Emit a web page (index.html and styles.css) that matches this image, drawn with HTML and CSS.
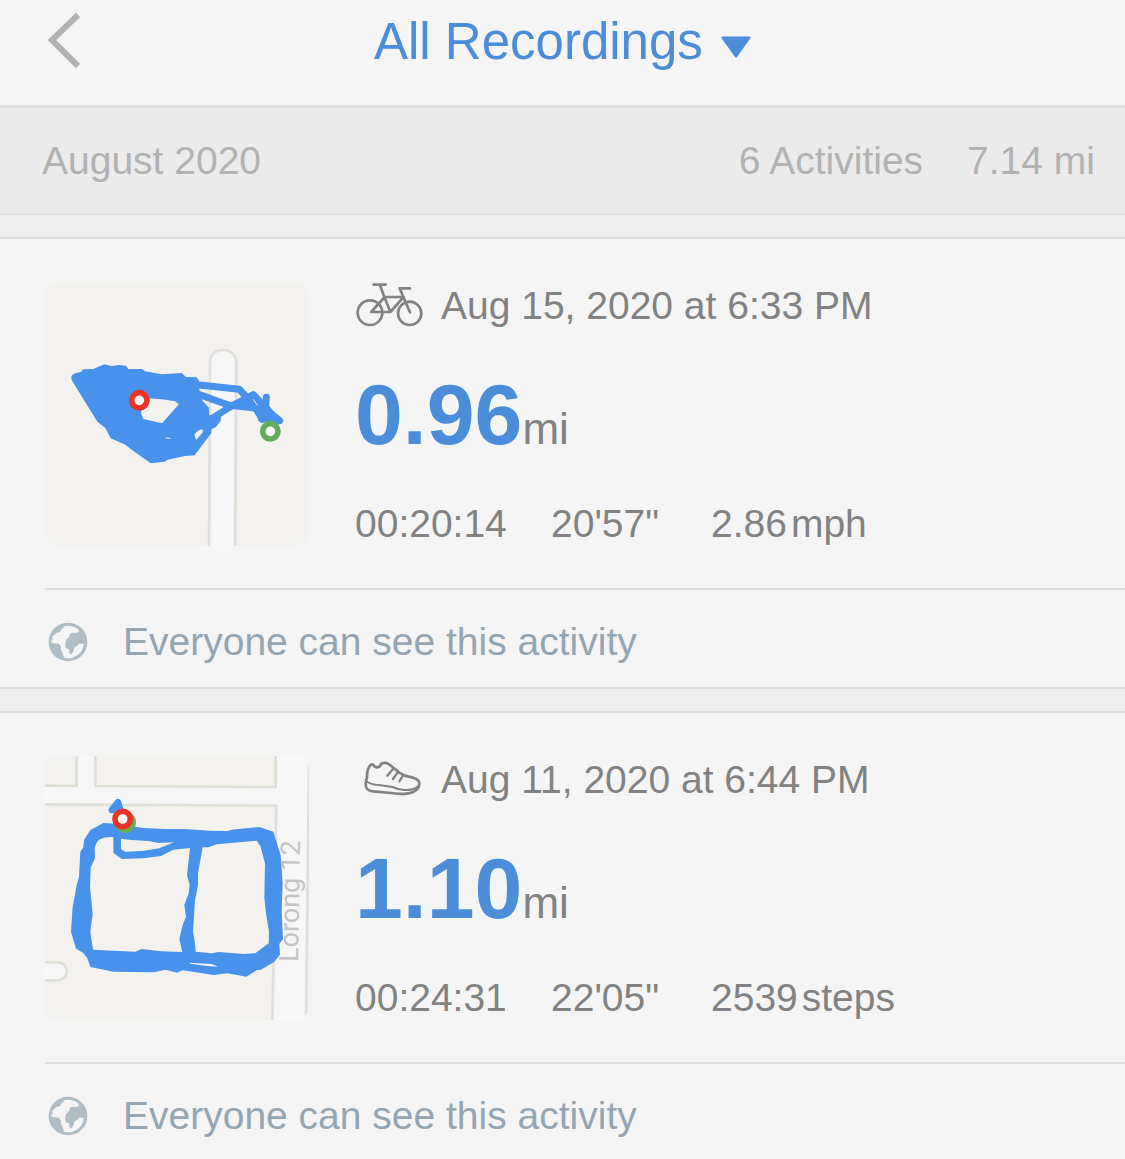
FILE: index.html
```html
<!DOCTYPE html>
<html lang="en">
  <head>
    <meta charset="UTF-8" />
    <meta name="viewport" content="width=device-width, initial-scale=1.0" />
    <title>All Recordings</title>
    <link rel="stylesheet" href="styles.css">
  </head>
  <body>
    <header class="topbar">
      <button class="back-btn" aria-label="Back">
        <svg viewBox="0 0 32 56" width="32" height="56">
          <path d="M30 3 L4 28 L30 54" fill="none" stroke="#b2b2b2" stroke-width="6" />
        </svg>
      </button>
      <div class="filter">
        <select class="filter-select" aria-label="Recordings filter">
          <option>All Recordings</option>
        </select>
        <svg class="filter-arrow" viewBox="0 0 30 22" width="30" height="22">
          <path d="M1 0.5 H29 Q30 1 29.5 2 L16 21 Q15 22 14 21 L0.5 2 Q0 1 1 0.5 Z" fill="#4c8dd9" />
        </svg>
      </div>
    </header>

    <main>
      <section class="month">
        <h2>August 2020</h2>
        <div class="month-totals">
          <span>6 Activities</span>
          <span>7.14 mi</span>
        </div>
      </section>

      <article class="card">
        <div class="card-body">
          <svg class="map" viewBox="15 18 792 792" role="img" aria-label="Ride route">
            <rect x="15" y="18" width="792" height="792" fill="#f3f2ee" />
            <path d="M507 815 L510 260 Q512 223 550 222 Q588 224 589 262 L585 815" fill="#f7f7f7" stroke="#e1dfda" stroke-width="8" />
            <g fill="none" stroke="#4892ec" stroke-width="21" stroke-linejoin="round" stroke-linecap="round">
              <path d="M470 326 L598 340 L640 385 L668 430" />
              <path d="M470 353 L565 387 L645 396" />
              <path d="M515 428 L568 394 L640 356 L690 410 L719 434 L690 442" />
              <path d="M679 364 L676 400 L664 428" />
            </g>
            <path fill="#4892ec" d="M600 372 L640 352 L665 372 L688 390 L702 408 L704 424 L722 432 L720 444 L684 440 L660 437 L650 420 L636 400 L595 398 Z" />
            <path fill="#4892ec" fill-rule="evenodd" d="M94 300 Q100 292 110 290 L123 288 L130 280 L160 279 L193 265 L215 270 L236 267 L258 269 L265 279 L306 279 L315 286 L365 295 L425 291 L438 303 L470 304 L478 316 L478 342 L488 375 L506 394 L508 418 L528 413 L543 423 L542 434 L528 453 L515 460 L514 471 L464 538 L435 540 L380 552 L374 557 L332 562 L276 522 L256 506 L212 487 L196 456 L172 437 L112 340 L94 309 Z M316 368 Q360 366 405 376 L417 385 L366 442 L310 429 L304 414 L304 390 Z M463 477 Q472 462 487 460 L489 467 L469 492 Z" />
            <path d="M376 486 L392 487 M640 370 L652 388" stroke="#f3f2ee" stroke-width="3" />
            <circle cx="298" cy="373" r="23" fill="#fff" stroke="#e93425" stroke-width="17" />
            <circle cx="691" cy="466" r="23" fill="#fff" stroke="#62ad58" stroke-width="17" />
          </svg>
          <div class="details">
            <div class="when">
              <svg class="sport" viewBox="15 18 210 144" role="img" aria-label="Cycling">
                <g fill="none" stroke="#828282" stroke-width="8" stroke-linecap="round" stroke-linejoin="round">
                  <circle cx="60" cy="110" r="37" />
                  <circle cx="179" cy="112" r="35" />
                  <path d="M71 26 H107 M90 28 L104 65 L121 107 M161 63 H104 L64 108 H121 L161 63" />
                  <path d="M180 37 H149 L161 65 L180 109" />
                </g>
              </svg>
              <time datetime="2020-08-15T18:33">Aug 15, 2020 at 6:33 PM</time>
            </div>
            <div class="distance">
              <strong>0.96</strong>
              <span>mi</span>
            </div>
            <div class="stats">
              <span>00:20:14</span>
              <span>20'57"</span>
              <span class="stat-unit">2.86<span>mph</span></span>
            </div>
          </div>
        </div>
        <div class="privacy">
          <svg class="globe" viewBox="55 125 120 120" aria-hidden="true">
            <circle cx="115" cy="185" r="58" fill="#b1bdc5" />
            <path fill="#f5f5f5" d="M102 138 L118 136 L137 141 L147 149 L147 156 L138 159 L134 157 L122 159 L118 171 L109 179 L106 195 L109 204 L118 207 L120 220 L125 222 L132 212 L134 202 L143 196 L147 190 L163 190 Q160 213 143 225 Q126 237 106 233 L101 227 L98 216 L93 209 L94 200 L88 190 L66 188 L65 182 L69 177 L68 168 L74 165 L79 158 L91 155 L96 145 L101 144 Z" />
          </svg>
          <span>Everyone can see this activity</span>
        </div>
      </article>

      <article class="card">
        <div class="card-body">
          <svg class="map" viewBox="15 18 792 792" role="img" aria-label="Walk route">
            <rect x="15" y="18" width="792" height="792" fill="#f7f7f7" />
            <g fill="#f3f2ee" stroke="#e1dfda" stroke-width="8">
              <path d="M5 5 H110 V108 L5 107 Z" />
              <path d="M166 5 H707 V111 L166 108 Z" />
              <path d="M5 163 L709 167 L697 820 H5 Z" />
              <path d="M807 45 L798 820 H830 V45 Z" />
            </g>
            <path d="M5 637 H56 Q80 640 80 664 Q80 689 54 691 H5" fill="#f7f7f7" stroke="#e1dfda" stroke-width="8" />
            <path fill="#4892ec" fill-rule="evenodd" d="M151 240 L190 219 L230 221 L310 234 L375 237 L430 237 L510 242 L562 243 L574 239 L658 231 L700 245 L722 315 L728 400 L725 482 L729 568 L718 582 L720 614 L702 636 L661 660 L651 660 L619 680 L562 670 L521 675 L428 661 L411 668 L377 659 L342 667 L220 665 L151 651 L142 625 L129 608 L108 596 L93 545 L98 470 L110 406 L117 380 L121 305 L130 292 L132 270 Z M180 268 Q195 260 220 261 L220 308 L245 327 L311 325 L363 318 L400 299 L450 294 L441 375 L449 405 L446 430 L433 465 L438 500 L427 528 L418 568 L427 606 L365 604 L305 597 L285 605 L159 599 L151 545 L158 492 L150 410 L152 353 L165 325 L164 295 Q170 272 180 268 Z M243 266 L275 270 L325 273 L357 279 L402 277 L357 295 L308 303 L255 305 L243 297 Z M488 292 L506 292 L530 283 L650 272 L661 288 L675 340 L673 443 L678 490 L687 545 L686 580 L646 610 L610 612 L536 606 L515 610 L467 605 L465 580 L459 545 L465 450 L474 406 L474 370 Z M449 638 L515 642 L534 650 L510 649 L449 641 Z" />
            <text class="street" transform="translate(774 636) rotate(-89)">Lorong 12</text>
            <path d="M234 156 L240 176 L215 180 Z" fill="#4892ec" stroke="#4892ec" stroke-width="19" stroke-linejoin="round" />
            <circle cx="256" cy="217" r="32" fill="#62ad58" />
            <circle cx="248" cy="207" r="23" fill="#fff" stroke="#e93425" stroke-width="17" />
          </svg>
          <div class="details">
            <div class="when">
              <svg class="sport" viewBox="15 18 210 144" role="img" aria-label="Walking">
                <g fill="none" stroke="#828282" stroke-width="8" stroke-linecap="round" stroke-linejoin="round">
                  <path d="M61 45 L68 43 Q74 51 80 52 Q90 53 93 42 Q105 35 116 42 L147 67 Q162 78 176 80 Q198 84 206 93 Q210 101 205 113 Q194 128 174 130 Q155 134 125 129 L68 124 Q48 122 47 105 Q46 94 51 83 Q50 60 61 45 Z" />
                  <path d="M49 93 Q57 103 90 106 L128 111 Q143 119 163 120 Q187 122 205 109" stroke-width="6" />
                  <path d="M129 57 L112 77 M143 67 L129 87 M158 78 L148 94" stroke-width="7" />
                </g>
              </svg>
              <time datetime="2020-08-11T18:44">Aug 11, 2020 at 6:44 PM</time>
            </div>
            <div class="distance">
              <strong>1.10</strong>
              <span>mi</span>
            </div>
            <div class="stats">
              <span>00:24:31</span>
              <span>22'05"</span>
              <span class="stat-unit">2539<span>steps</span></span>
            </div>
          </div>
        </div>
        <div class="privacy">
          <svg class="globe" viewBox="55 125 120 120" aria-hidden="true">
            <circle cx="115" cy="185" r="58" fill="#b1bdc5" />
            <path fill="#f5f5f5" d="M102 138 L118 136 L137 141 L147 149 L147 156 L138 159 L134 157 L122 159 L118 171 L109 179 L106 195 L109 204 L118 207 L120 220 L125 222 L132 212 L134 202 L143 196 L147 190 L163 190 Q160 213 143 225 Q126 237 106 233 L101 227 L98 216 L93 209 L94 200 L88 190 L66 188 L65 182 L69 177 L68 168 L74 165 L79 158 L91 155 L96 145 L101 144 Z" />
          </svg>
          <span>Everyone can see this activity</span>
        </div>
      </article>
    </main>
  </body>
</html>
```
FILE: styles.css
```css
* {
  box-sizing: border-box;
}

body {
  margin: 0;
  font-family: "Liberation Sans", Arial, sans-serif;
  font-size: 39px;
  line-height: 48px;
  background: #eeeeee;
  color: #828282;
}

svg {
  display: block;
  flex: none;
}

.topbar {
  display: grid;
  grid-template-columns: 1fr auto 1fr;
  align-items: center;
  padding: 10px 48px 35px;
  background: #f5f5f5;
  border-bottom: 3px solid #dedede;
}

.back-btn {
  justify-self: start;
  padding: 0;
  border: none;
  background: none;
  cursor: pointer;
}

.filter {
  display: grid;
  align-items: center;
}

.filter-select {
  grid-area: 1 / 1;
  height: 60px;
  padding: 2px 48px 0 0;
  border: none;
  background: none;
  appearance: none;
  font-family: inherit;
  font-size: 51px;
  color: #4c8dd9;
  cursor: pointer;
}

.filter-arrow {
  grid-area: 1 / 1;
  justify-self: end;
  margin-top: 14px;
  pointer-events: none;
}

.month {
  display: flex;
  justify-content: space-between;
  padding: 29px 30px 29px 42px;
  background: #ebebeb;
  border-bottom: 1px solid #dedede;
  color: #b2b2b2;
}

.month h2 {
  margin: 0;
  font-size: inherit;
  font-weight: normal;
}

.month-totals {
  display: flex;
  gap: 44px;
}

.card {
  margin: 22px 0;
  background: #f5f5f5;
  border-top: 2px solid #dedede;
  border-bottom: 2px solid #dedede;
}

.card:last-child {
  margin-bottom: 0;
}

.card-body {
  display: flex;
  gap: 46px;
  margin-left: 45px;
  padding: 43px 0 42px;
  border-bottom: 2px solid #dedede;
}

.map {
  width: 264px;
  height: 264px;
  border-radius: 14px;
}

.street {
  font-family: Roboto, sans-serif;
  font-size: 81px;
  fill: #c4c4c4;
}

.when {
  display: flex;
  gap: 16px;
}

.sport {
  width: 70px;
  height: 48px;
}

.distance {
  display: flex;
  align-items: baseline;
  margin: 36px 0 40px;
  font-size: 44px;
  line-height: 48px;
}

.distance strong {
  font-size: 86px;
  line-height: 96px;
  color: #4c8dd9;
}

.stats {
  display: grid;
  grid-template-columns: 196px 160px auto;
  justify-content: start;
  line-height: 44px;
}

.stat-unit {
  display: flex;
  gap: 4px;
}

.privacy {
  display: flex;
  align-items: center;
  gap: 35px;
  padding: 28px 48px 21px;
  color: #95a5b1;
}

.globe {
  width: 40px;
  height: 40px;
}
```
